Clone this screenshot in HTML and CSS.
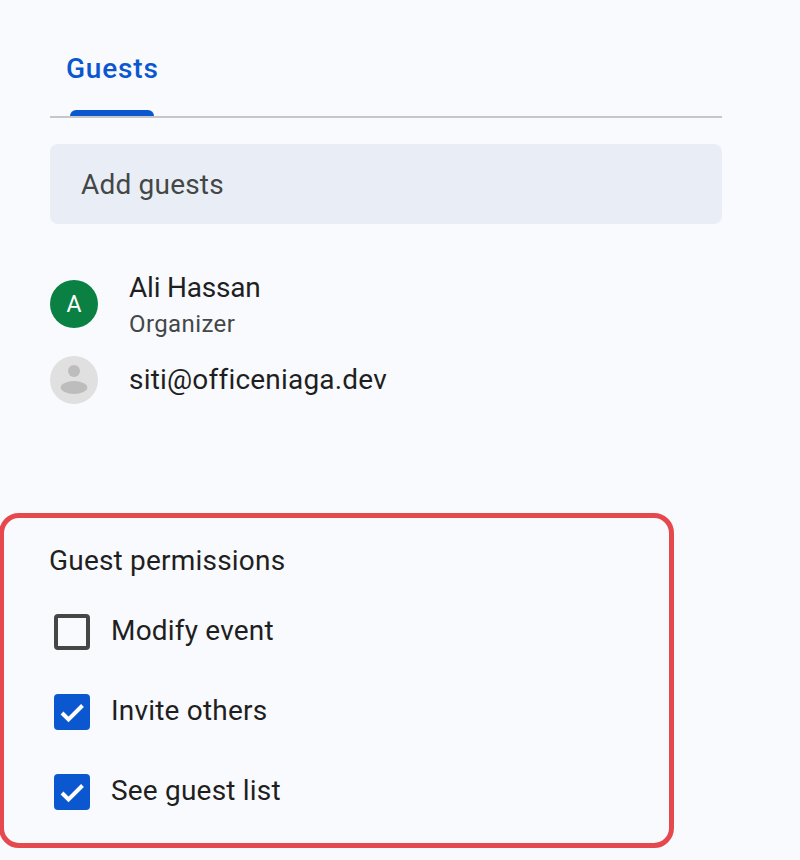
FILE: index.html
```html
<!DOCTYPE html>
<html lang="en">
<head>
  <meta charset="UTF-8">
  <meta name="viewport" content="width=device-width, initial-scale=1.0">
  <title>Guests</title>
  <link rel="stylesheet" href="styles.css">
</head>
<body>
  <div class="guests">
    <div class="tabs">
      <div class="tab">
        <span class="tab-label">Guests</span>
        <span class="tab-bar"></span>
      </div>
    </div>
    <div class="add-guests">Add guests</div>
    <ul class="guest-list">
      <li class="guest guest-organizer">
        <span class="avatar avatar-green">A</span>
        <div class="guest-info">
          <div class="guest-name">Ali Hassan</div>
          <div class="guest-role">Organizer</div>
        </div>
      </li>
      <li class="guest">
        <span class="avatar avatar-grey">
          <svg width="48" height="48" viewBox="0 0 48 48">
            <circle cx="24" cy="15" r="6" fill="#bdbdbd"/>
            <ellipse cx="24" cy="31.5" rx="13.3" ry="6.5" fill="#bdbdbd"/>
          </svg>
        </span>
        <div class="guest-name">siti@officeniaga.dev</div>
      </li>
    </ul>
  </div>

  <div class="permissions">
    <div class="permissions-title">Guest permissions</div>
    <div class="perm">
      <span class="box"></span>
      <span class="perm-label">Modify event</span>
    </div>
    <div class="perm">
      <span class="box checked">
        <svg width="36" height="36" viewBox="0 0 36 36">
          <path d="M8 19l6.5 6.5L28.5 11.5" fill="none" stroke="#fff" stroke-width="4"/>
        </svg>
      </span>
      <span class="perm-label">Invite others</span>
    </div>
    <div class="perm">
      <span class="box checked">
        <svg width="36" height="36" viewBox="0 0 36 36">
          <path d="M8 19l6.5 6.5L28.5 11.5" fill="none" stroke="#fff" stroke-width="4"/>
        </svg>
      </span>
      <span class="perm-label">See guest list</span>
    </div>
  </div>
</body>
</html>
```

FILE: styles.css
```css
html, body {
  margin: 0;
  padding: 0;
}
body {
  width: 800px;
  height: 860px;
  overflow: hidden;
  background-color: #f9fafe;
  color: #1f1f1f;
  font-family: Roboto, "Liberation Sans", sans-serif;
  letter-spacing: 0.2px;
}
.guests {
  width: 672px;
  margin-left: 50px;
}
.tabs {
  height: 116px;
  border-bottom: 2px solid #c4c7c5;
}
.tab {
  width: 84px;
  height: 116px;
  margin-left: 20px;
  display: flex;
  flex-direction: column;
  justify-content: flex-end;
}
.tab-label {
  margin: 0 -8px 25px -4px;
  font-size: 28px;
  line-height: 32px;
  font-weight: 500;
  letter-spacing: 0.8px;
  color: #0b57d0;
}
.tab-bar {
  height: 6px;
  background-color: #0b57d0;
  border-radius: 6px 6px 0 0;
}
.add-guests {
  margin-top: 26px;
  height: 80px;
  line-height: 82px;
  padding-left: 31px;
  background-color: #e9eef6;
  border-radius: 8px;
  font-size: 28px;
  color: #444746;
}
.guest-list {
  list-style: none;
  margin: 0;
  padding: 0;
}
.guest {
  display: flex;
  align-items: center;
  gap: 31px;
  margin-top: 14px;
}
.guest-organizer {
  margin-top: 42px;
}
.avatar {
  width: 48px;
  height: 48px;
  border-radius: 50%;
  flex: none;
  display: flex;
  align-items: center;
  justify-content: center;
  overflow: hidden;
}
.avatar-green {
  background-color: #0b8043;
  color: #fff;
  font-size: 23px;
}
.avatar-grey {
  background-color: #e0e0e0;
}
.guest-info {
  padding-top: 4px;
}
.guest-info .guest-name {
  letter-spacing: -0.2px;
}
.guest-name {
  font-size: 28px;
  line-height: 36px;
}
.guest-role {
  font-size: 24px;
  line-height: 36px;
  letter-spacing: 0.4px;
  color: #444746;
}
.permissions {
  width: 675px;
  height: 335px;
  box-sizing: border-box;
  margin-top: 109px;
  margin-left: -1px;
  border: 5px solid #e5484d;
  border-radius: 20px;
  padding: 25px 0 0 45px;
  font-size: 28px;
}
.permissions-title {
  line-height: 36px;
  margin-bottom: 13px;
}
.perm {
  display: flex;
  align-items: center;
  gap: 21px;
  height: 80px;
  margin-left: 5px;
}
.perm-label {
  margin-top: -4px;
}
.box {
  width: 36px;
  height: 36px;
  box-sizing: border-box;
  border: 4px solid #444746;
  border-radius: 4px;
  flex: none;
}
.box.checked {
  border: none;
  background-color: #0b57d0;
}
.box svg {
  display: block;
}
```
